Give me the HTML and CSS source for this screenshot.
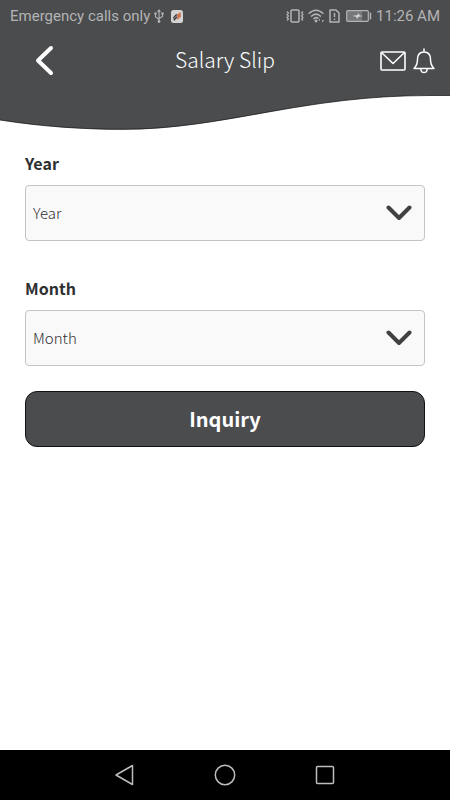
FILE: index.html
```html
<!DOCTYPE html>
<html lang="en">
<head>
<meta charset="utf-8">
<meta name="viewport" content="width=device-width, initial-scale=1">
<title>Salary Slip</title>
<link rel="stylesheet" href="styles.css">
</head>
<body>
<header class="header">
  <div class="status">
    <span>Emergency calls only</span>
    <svg class="usb" width="10" height="14" viewBox="0 0 10 14" fill="none" stroke="currentColor" stroke-width="1.1"><path d="M5 2v11M1.500 4v4L5 10.300M8.500 4v3.500L5 9.500"/><path d="M5 0l2 3H3zM.3 3.500h2.400v2H.3zM7.300 3.500h2.400v2H7.300z" fill="currentColor" stroke="none"/><circle cx="5" cy="12.500" r="1.400" fill="currentColor" stroke="none"/></svg>
    <svg class="app" width="12" height="13" viewBox="0 0 12 13"><rect width="12" height="13" rx="2.500" fill="#d5d3d1"/><path d="M2 7.500L5.500 3.500 6 8l-3 3z" fill="#38383a"/><path d="M6 4.500L9.500 2l.5 4.500L6.500 10z" fill="#cf7350"/><path d="M2 9.500l3.500-3.500" stroke="#d5d3d1" stroke-width=".7"/></svg>
    <span class="signals">
      <svg width="18" height="14" viewBox="0 0 18 14" fill="none" stroke="currentColor" stroke-width="1.500"><rect x="5" y="1" width="8" height="12" rx="1"/><path d="M1 2.500l1.500 1.500L1 5.500 2.500 7 1 8.500 2.500 10 1 11.500M17 2.500L15.500 4 17 5.500 15.500 7 17 8.500 15.500 10l1.500 1.500" stroke-width="1.200"/></svg>
      <svg width="17" height="14" viewBox="0 0 17 14" fill="none" stroke="currentColor" stroke-width="1.500"><path d="M.6 4.800Q8 -2.200 15.400 4.800M3 7.500Q8 2.800 13 7.500M5.400 10Q8 7.500 10.500 9.500"/><circle cx="8" cy="12" r="1.400" fill="currentColor" stroke="none"/><path d="M12 13.500v-4l-1.800 2.200H12zM14 9.500v4l2.300-2.200H14z" fill="currentColor" stroke="none"/></svg>
      <svg width="11" height="14" viewBox="0 0 11 14" fill="none" stroke="currentColor" stroke-width="1.500"><path d="M1 1h6l3 3v9H1z" stroke-linejoin="round"/><path d="M5.500 4v4M5.500 9.500V11"/></svg>
      <svg class="battery" width="26" height="12" viewBox="0 0 26 12"><rect x=".7" y=".7" width="21.600" height="10.600" rx="1" fill="#77787a" stroke="currentColor" stroke-width="1.200"/><path d="M16 1.500h5.500v9H16z" fill="#58595b"/><path d="M6 6l5.500-1 .5-2 2 2.500L17 6l-5 1-.5 2-2-2.500z" fill="#d2d2d2"/><path d="M23.700 2.500h1.500v7h-1.500z" fill="currentColor"/></svg>
      <time>11:26 AM</time>
    </span>
  </div>
  <div class="bar">
    <button class="icon-button back" type="button" aria-label="Back"><svg width="20" height="32" viewBox="0 0 20 32" fill="none" stroke="#fff" stroke-width="4" stroke-linecap="round" stroke-linejoin="round"><path d="M17 3L4 15.500 17 28"/></svg></button>
    <h1 class="title">Salary Slip</h1>
    <div class="actions">
      <button class="icon-button" type="button" aria-label="Messages"><svg width="26" height="20" viewBox="0 0 26 20" fill="none" stroke="#fff" stroke-width="1.600" stroke-linejoin="round"><rect x="1" y="1" width="24" height="18" rx="1"/><path d="M1.500 1.500L13 12.500 24.500 1.500"/></svg></button>
      <button class="icon-button" type="button" aria-label="Notifications"><svg width="22" height="26" viewBox="0 0 22 26" fill="none" stroke="#fff" stroke-width="1.500" stroke-linejoin="round" stroke-linecap="round"><path d="M11 1v3M1 20.500c2-2 3.500-3.500 3.500-9C4.500 6.500 7 4 11 4s6.500 2.500 6.500 7.500c0 5.500 1.500 7 3.500 9z"/><path d="M7.800 21c.4 4.800 6 4.800 6.400 0"/></svg></button>
    </div>
  </div>
  <svg class="wave" viewBox="0 0 450 40" preserveAspectRatio="none"><path d="M0 0H450V5.500H430C300 5.500 225 39.500 123 39.500C85 39.500 45 37 0 30z" fill="#4b4c4e"/><path d="M450 5.500H430C300 5.500 225 39.300 123 39.300C85 39.300 45 37 0 30" fill="none" stroke="#111" stroke-width=".7"/></svg>
</header>
<main class="content">
  <form class="form">
    <div class="field">
      <label for="year">Year</label>
      <div class="picker">
        <select id="year"><option>Year</option></select>
        <svg class="chevron" width="26" height="16" viewBox="0 0 26 16"><path d="M2.500 2.500L13 13 23.500 2.500"/></svg>
      </div>
    </div>
    <div class="field">
      <label for="month">Month</label>
      <div class="picker">
        <select id="month"><option>Month</option></select>
        <svg class="chevron" width="26" height="16" viewBox="0 0 26 16"><path d="M2.500 2.500L13 13 23.500 2.500"/></svg>
      </div>
    </div>
    <button class="submit" type="button">Inquiry</button>
  </form>
</main>
<nav class="system">
  <button class="icon-button" type="button" aria-label="System back"><svg width="22" height="22" viewBox="0 0 22 22"><path d="M18.500 1.500v19L2 11z"/></svg></button>
  <button class="icon-button" type="button" aria-label="Home"><svg width="22" height="22" viewBox="0 0 22 22"><circle cx="11" cy="11" r="9.700"/></svg></button>
  <button class="icon-button" type="button" aria-label="Recent apps"><svg width="22" height="22" viewBox="0 0 22 22"><rect x="2.500" y="2.500" width="17" height="17" rx="1"/></svg></button>
</nav>
</body>
</html>
```
FILE: styles.css
```css
* {
  box-sizing: border-box;
}

body {
  display: flex;
  flex-direction: column;
  min-height: 100vh;
  margin: 0;
  background: #fff;
  color: #2e2f31;
  font-family: "Noto Sans CJK SC", "Open Sans", sans-serif;
}

svg {
  display: block;
  flex: none;
}

.status {
  display: flex;
  align-items: center;
  height: 32px;
  padding: 0 10px;
  background: #4b4c4e;
  color: #b4b4b5;
  font: 15px/32px Roboto, sans-serif;
  white-space: nowrap;
}

.usb {
  margin-left: 4px;
}

.app {
  margin-left: 7px;
}

.signals {
  display: flex;
  align-items: center;
  gap: 4px;
  margin-left: auto;
}

.battery {
  margin-left: 2px;
}

.bar {
  display: grid;
  grid-template-columns: 1fr auto 1fr;
  align-items: center;
  height: 58px;
  padding: 0 15px;
  background: #4b4c4e;
}

.icon-button {
  padding: 0;
  border: 0;
  background: none;
}

.back {
  justify-self: start;
  margin-left: 19px;
}

.title {
  margin: 0;
  padding-bottom: 4px;
  color: #fff;
  font-size: 21px;
  font-weight: 300;
  line-height: 32px;
}

.actions {
  display: flex;
  align-items: center;
  justify-self: end;
  gap: 7px;
}

.wave {
  width: 100%;
  height: 40px;
}

.content {
  flex: 1;
  padding: 22px 25px;
}

.form {
  display: flex;
  flex-direction: column;
}

.field {
  margin-bottom: 36px;
}

.field:nth-child(2) {
  margin-bottom: 25px;
}

.field label {
  display: block;
  margin-bottom: 11px;
  font-size: 16px;
  font-weight: 700;
  line-height: 22px;
}

.picker {
  position: relative;
}

.picker select {
  display: block;
  width: 100%;
  height: 56px;
  padding: 0 48px 0 7px;
  border: 1px solid #c4c4c4;
  border-radius: 4px;
  appearance: none;
  background: #f9f9f9;
  color: #2e2f31;
  font: 300 15px/24px "Noto Sans CJK SC", "Open Sans", sans-serif;
}

.chevron {
  position: absolute;
  top: 20px;
  right: 13px;
  fill: none;
  stroke: #404143;
  stroke-width: 4;
  stroke-linecap: round;
  stroke-linejoin: round;
  pointer-events: none;
}

.submit {
  height: 56px;
  border: 1px solid #111;
  border-radius: 12px;
  background: #4b4c4e;
  color: #fff;
  font: 700 20px/32px "Noto Sans CJK SC", "Open Sans", sans-serif;
}

.system {
  display: flex;
  align-items: center;
  justify-content: center;
  gap: 78px;
  height: 50px;
  background: #000;
}

.system svg {
  fill: none;
  stroke: #bdbdbd;
  stroke-width: 1.5;
  stroke-linejoin: round;
}
```
